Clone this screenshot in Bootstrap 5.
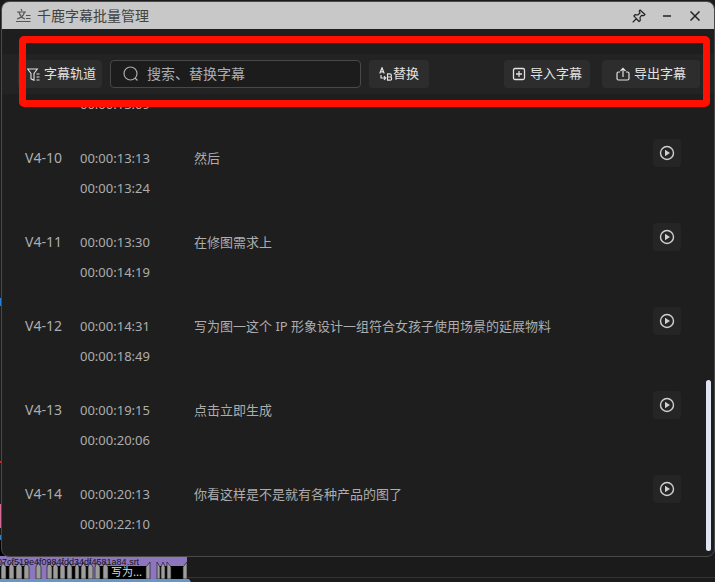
<!DOCTYPE html>
<html lang="zh-CN">
<head>
<meta charset="utf-8">
<meta name="viewport" content="width=device-width, initial-scale=1">
<title>千鹿字幕批量管理</title>
<link href="https://cdn.jsdelivr.net/npm/bootstrap@5.3.0/dist/css/bootstrap.min.css" rel="stylesheet">
<style>
body{background:#1b1b1b;color:#adadad;font:13px/30px "Noto Sans","Noto Sans CJK SC",sans-serif;height:100vh;min-height:320px}
svg{display:block;flex:none}
.app-window{background:#1e1e1e;border:1px solid #494949;border-radius:8px;margin:1px 0 0 1px;min-height:0;z-index:1}
.titlebar{background:#c8c8c8;color:#424242;height:27px;flex:none;padding:0 14px;font-size:14px;line-height:24px}
.app-name{margin-left:6px}
.plain-btn{background:none;border:0;padding:0;color:#222}
.win-controls{gap:16px}
.win-controls .close-btn{margin-left:2px}
.toolbar{background:#232323;margin-top:25px;padding:6px 14px 6px 16px;height:40px;flex:none}
.tool-btn{background:#2d2d2d;color:#e2e2e2;border:0;border-radius:4px;height:28px;padding:0 10px;font-size:13px;line-height:26px;white-space:nowrap}
.tool-btn span{padding-bottom:2px}
.tool-btn:hover{background:#383838;color:#fff}
.filter-btn{padding:0 6px 0 9px}
.import-btn{padding:0 8px}
.export-btn{padding:0 14px}
.search-box{width:251px;height:28px;border:1px solid #484848;border-radius:4px;background:#1c1c1c;padding:0 12px;color:#aaa}
.search-box input{background:none;border:0;outline:0;color:#ddd;padding:0;font-size:14px;line-height:24px;min-width:0}
.search-box input::placeholder{color:#aaacb4;opacity:1}
.cue-pane{padding-bottom:5px;min-height:0}
.cue{padding:12px 33px 12px 23px;flex:none}
.cue-id{width:55px;font-size:14px}
.cue-time{width:114px}
.play-btn{width:28px;height:28px;background:#252525;border:0;border-radius:4px;margin-top:-4px;color:#d0d0d0}
.scroll-thumb{right:3px;bottom:5px;width:5px;height:171px;border-radius:3px;background:#e1e5f1}
.highlight{left:19px;right:5px;top:36px;height:71px;border:7px solid #ff1000;border-radius:5px;z-index:3;pointer-events:none}
.timeline{height:25px;flex:none;border-bottom:4px solid #1b1b1b;box-shadow:inset 0 -1px #333}
.edge-art{left:0;bottom:0}
</style>
<script src="https://cdn.jsdelivr.net/npm/bootstrap@5.3.0/dist/js/bootstrap.bundle.min.js"></script>
</head>
<body class="d-flex flex-column position-relative overflow-hidden">
<main class="app-window d-flex flex-column flex-grow-1 position-relative overflow-hidden">
  <header class="titlebar d-flex align-items-center">
    <svg width="15" height="16" viewBox="0 0 15 16" fill="none" stroke="#555" stroke-width="1.2"><path d="M5 1l1 2M1 4h9M3 4c1 4 3 6 6 7M8.500 4C7.500 8 5 10 1 11M10 7.500h4.500M10 10.500h4.500M0 13.500h14.500"/></svg>
    <span class="app-name">千鹿字幕批量管理</span>
    <div class="win-controls ms-auto d-flex align-items-center">
      <button class="plain-btn" aria-label="置顶"><svg width="14" height="14" viewBox="0 0 14 14" fill="none" stroke="currentColor" stroke-width="1.2" stroke-linejoin="round"><path d="M8 1l5 4.500-1.500 1.200-2-.3L8 8.500l.3 3L7 12.500 1.800 6.800 3 5.600l2.700.4L8 4 7.200 2zM4.500 9.500L.7 13.300"/></svg></button>
      <button class="plain-btn" aria-label="最小化"><svg width="10" height="10" viewBox="0 0 10 10" stroke="currentColor" stroke-width="1.600"><path d="M1 5h8"/></svg></button>
      <button class="plain-btn close-btn" aria-label="关闭"><svg width="10" height="10" viewBox="0 0 10 10" stroke="currentColor" stroke-width="1.500"><path d="M.5.5l9 9M9.500.5l-9 9"/></svg></button>
    </div>
  </header>
  <div class="toolbar d-flex align-items-center gap-2">
    <button class="tool-btn filter-btn d-flex align-items-center gap-1"><svg width="13" height="13" viewBox="0 0 13 13" fill="none" stroke="currentColor" stroke-width="1.100"><path d="M.7 1h9.600L7 5.500v6.800l-3-1.500V5.500zM9.500 6h3M9.500 9h3M9.500 12h3"/></svg><span>字幕轨道</span></button>
    <label class="search-box d-flex align-items-center gap-2"><svg width="16" height="16" viewBox="0 0 16 16" fill="none" stroke="currentColor" stroke-width="1.200"><circle cx="7.500" cy="7.500" r="6.500"/><path d="M12 12l2.500 2.500"/></svg><input class="flex-grow-1" type="text" aria-label="搜索、替换字幕" placeholder="搜索、替换字幕"></label>
    <button class="tool-btn d-flex align-items-center"><svg width="14" height="14" viewBox="0 0 14 14" fill="none" stroke="currentColor" stroke-width="1.200"><path d="M.8 6.500L3 .8l2.200 5.700M1.500 4.800h3M2 8v3h4.500M5 9.200L6.700 11 5 12.800M8.500 6.800v6.400h2.700c2 0 2-3.100 0-3.200 1.700-.2 1.500-3.200-.2-3.200zM8.500 10h2.700"/></svg><span>替换</span></button>
    <div class="ms-auto d-flex gap-2">
      <button class="tool-btn import-btn d-flex align-items-center gap-1 me-1"><svg width="14" height="14" viewBox="0 0 14 14" fill="none" stroke="currentColor" stroke-width="1.300"><rect x="1.500" y="1.500" width="11" height="11" rx="1.500"/><path d="M7 4v6M4 7h6"/></svg><span>导入字幕</span></button>
      <button class="tool-btn export-btn d-flex align-items-center gap-1"><svg width="14" height="14" viewBox="0 0 14 14" fill="none" stroke="currentColor" stroke-width="1.200"><path d="M4 5H2.500Q1 5 1 6.500v5Q1 13 2.500 13h9q1.500 0 1.500-1.500v-5Q13 5 11.500 5H10M7 10V1.500M4.500 4L7 1.300 9.500 4"/></svg><span>导出字幕</span></button>
    </div>
  </div>
  <section class="cue-pane d-flex flex-column flex-grow-1 justify-content-end overflow-hidden" aria-label="字幕">
    <div class="cue d-flex"><span class="cue-id"></span><div class="cue-time"><div>&nbsp;</div><div>00:00:13:09</div></div></div>
    <div class="cue d-flex"><span class="cue-id">V4-10</span><div class="cue-time"><div>00:00:13:13</div><div>00:00:13:24</div></div><span class="flex-grow-1">然后</span><button class="play-btn d-flex align-items-center justify-content-center" aria-label="播放"><svg width="16" height="16" viewBox="0 0 16 16"><circle cx="8" cy="8" r="6.500" fill="none" stroke="currentColor" stroke-width="1.400"/><path d="M6 4.800L11 8 6 11.200z" fill="currentColor"/></svg></button></div>
    <div class="cue d-flex"><span class="cue-id">V4-11</span><div class="cue-time"><div>00:00:13:30</div><div>00:00:14:19</div></div><span class="flex-grow-1">在修图需求上</span><button class="play-btn d-flex align-items-center justify-content-center" aria-label="播放"><svg width="16" height="16" viewBox="0 0 16 16"><circle cx="8" cy="8" r="6.500" fill="none" stroke="currentColor" stroke-width="1.400"/><path d="M6 4.800L11 8 6 11.200z" fill="currentColor"/></svg></button></div>
    <div class="cue d-flex"><span class="cue-id">V4-12</span><div class="cue-time"><div>00:00:14:31</div><div>00:00:18:49</div></div><span class="flex-grow-1">写为图一这个 IP 形象设计一组符合女孩子使用场景的延展物料</span><button class="play-btn d-flex align-items-center justify-content-center" aria-label="播放"><svg width="16" height="16" viewBox="0 0 16 16"><circle cx="8" cy="8" r="6.500" fill="none" stroke="currentColor" stroke-width="1.400"/><path d="M6 4.800L11 8 6 11.200z" fill="currentColor"/></svg></button></div>
    <div class="cue d-flex"><span class="cue-id">V4-13</span><div class="cue-time"><div>00:00:19:15</div><div>00:00:20:06</div></div><span class="flex-grow-1">点击立即生成</span><button class="play-btn d-flex align-items-center justify-content-center" aria-label="播放"><svg width="16" height="16" viewBox="0 0 16 16"><circle cx="8" cy="8" r="6.500" fill="none" stroke="currentColor" stroke-width="1.400"/><path d="M6 4.800L11 8 6 11.200z" fill="currentColor"/></svg></button></div>
    <div class="cue d-flex"><span class="cue-id">V4-14</span><div class="cue-time"><div>00:00:20:13</div><div>00:00:22:10</div></div><span class="flex-grow-1">你看这样是不是就有各种产品的图了</span><button class="play-btn d-flex align-items-center justify-content-center" aria-label="播放"><svg width="16" height="16" viewBox="0 0 16 16"><circle cx="8" cy="8" r="6.500" fill="none" stroke="currentColor" stroke-width="1.400"/><path d="M6 4.800L11 8 6 11.200z" fill="currentColor"/></svg></button></div>
  </section>
  <div class="scroll-thumb position-absolute"></div>
</main>
<div class="highlight position-absolute"></div>
<footer class="timeline"></footer>
<svg class="edge-art position-absolute" width="192" height="290" viewBox="0 292 192 290">
  <path fill="#2482d8" d="M0 298h2v8H0zM0 535h2v5H0z"/><path fill="#e02818" d="M0 461h2v2H0z"/><path fill="#d66898" d="M0 504h2v24H0z"/>
  <path fill="#000" d="M0 540h2l3 16H0z"/>
  <path fill="#8d76bd" d="M0 556h187v23H0z"/>
  <path fill="#000" d="M0 566h28v13H0zM36 566h3v13h-3zM47 566h45v13H47zM95 566h51v13H95zM157 566h10v13h-10zM170 566h13v13h-13z"/>
  <path fill="#9d9d9d" stroke="#222" stroke-width=".7" d="M1 579v-12l2-5 3 5v12zM9 579v-12l2-5 3 5v12zM16 579v-12l3-5 3 5v12zM24 579v-12l2-5 3 5v12zM36 579v-12l2-5 3 5v12zM47 579v-12l2-5 3 5v12zM53 579v-12l2-5 3 5v12zM60 579v-12l2-5 3 5v12zM67 579v-12l2-5 3 5v12zM75 579v-12l2-5 2 5v12zM81 579v-12l2-5 3 5v12zM88 579v-12l2-5 3 5v12zM95 579v-12l2-5 3 5v12zM103 579v-12l2-5 3 5v12zM146 579v-12l4-5v17zM157 579v-17l3 5v12zM161 579v-12l2-5 2 5v12zM167 579v-17l4 5v12zM183 579v-12l4-5v17z"/>
  <text x="-3" y="565" font-size="9" fill="#171222" font-family="Liberation Sans, sans-serif">07cf519e4f0984fdd34df4581a84.srt</text>
  <text x="111" y="576" font-size="11" fill="#ddd" font-family="Noto Sans CJK SC, sans-serif">写为...</text>
  <path fill="#6796c8" d="M0 579h189l2 3H0z"/>
</svg>
</body>
</html>
